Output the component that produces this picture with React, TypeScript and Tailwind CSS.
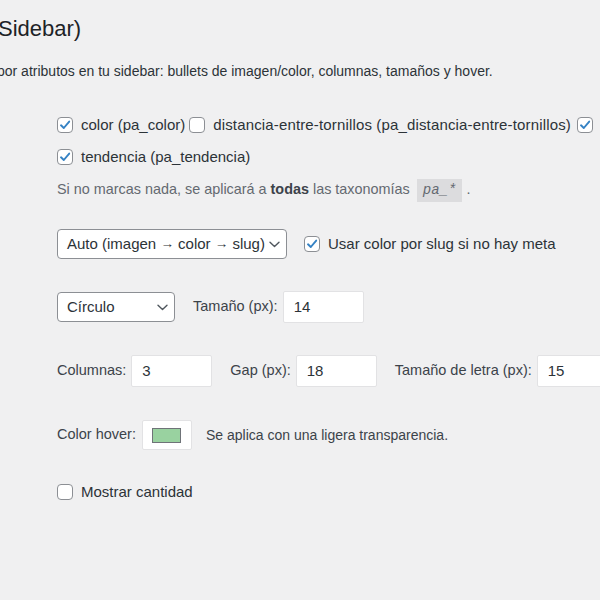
const Check = ({ checked }: { checked?: boolean }) => (
  <span className="flex h-4 w-4 shrink-0 items-center justify-center rounded-[4px] border border-[#8c8f94] bg-white">
    {checked && (
      <svg width="12" height="12" viewBox="0 0 12 12" fill="none">
        <path d="M2 6.3 L4.8 9 L10.2 2.6" stroke="#3582c4" strokeWidth="1.9" strokeLinecap="round" strokeLinejoin="round" />
      </svg>
    )}
  </span>
);

const Chevron = () => (
  <svg width="11" height="7" viewBox="0 0 11 7" fill="none">
    <path d="M1 1.2 L5.5 5.6 L10 1.2" stroke="#50575e" strokeWidth="1.4" strokeLinecap="round" strokeLinejoin="round" />
  </svg>
);

const Arrow = () => <span className="align-[1px] text-[13.5px]">→</span>;

const NumberInput = ({ value }: { value: string }) => (
  <div className="flex h-[32px] w-[81px] shrink-0 items-center rounded-[2px] border border-[#e2e2e4] bg-white pl-[10px] text-[15px] text-[#2c3338]">
    {value}
  </div>
);

export default function App() {
  return (
    <div className="h-[600px] w-[600px] overflow-hidden bg-[#f0f0f1] font-['Liberation_Sans',Arial,sans-serif] text-[#2c3338]">
      <h1 className="ml-[-2px] mt-[15px] whitespace-nowrap text-[22px] leading-[28px] text-[#1d2327]">Sidebar)</h1>
      <p className="ml-[-3px] mt-[19px] whitespace-nowrap text-[14px] leading-[18px] text-[#2c3338]">
        por atributos en tu sidebar: bullets de imagen/color, columnas, tamaños y hover.
      </p>

      <div className="ml-[57px] mt-[29px] w-[700px]">
        <div className="flex h-[32px] items-center whitespace-nowrap text-[15px]">
          <label className="mr-[4px] flex items-center gap-[8px]">
            <Check checked />
            <span>color (pa_color)</span>
          </label>
          <label className="mr-[6px] flex items-center gap-[8px]">
            <Check />
            <span className="tracking-[0.15px]">distancia-entre-tornillos (pa_distancia-entre-tornillos)</span>
          </label>
          <label className="flex items-center gap-[8px]">
            <Check checked />
          </label>
        </div>
        <div className="flex h-[32px] items-center whitespace-nowrap text-[15px]">
          <label className="flex items-center gap-[8px]">
            <Check checked />
            <span>tendencia (pa_tendencia)</span>
          </label>
        </div>
        <div className="mt-[1px] flex h-[32px] items-center whitespace-nowrap text-[14.4px] text-[#646970]">
          <span>
            Si no marcas nada, se aplicará a <b className="text-[#3c434a]">todas</b> las taxonomías
          </span>
          <code className="ml-[7px] bg-[#dcdcde] px-[6px] py-[1px] font-['Liberation_Mono',monospace] text-[14px] italic text-[#646970]">
            pa_*
          </code>
          <span className="ml-[4px]">.</span>
        </div>

        <div className="mt-[23px] flex items-center gap-[17px] whitespace-nowrap">
          <div className="flex h-[30px] w-[230px] shrink-0 items-center justify-between rounded-[4px] border border-[#8c8f94] bg-white pl-[9px] pr-[6px] text-[15px] text-[#2c3338]">
            <span className="whitespace-nowrap">
              Auto (imagen <Arrow /> color <Arrow /> slug)
            </span>
            <Chevron />
          </div>
          <label className="flex items-center gap-[8px] text-[15px]">
            <Check checked />
            <span>Usar color por slug si no hay meta</span>
          </label>
        </div>

        <div className="mt-[32px] flex h-[32px] items-center whitespace-nowrap text-[14.5px] text-[#3c434a]">
          <div className="flex h-[30px] w-[118px] shrink-0 items-center justify-between rounded-[4px] border border-[#8c8f94] bg-white pl-[9px] pr-[6px] text-[15px] text-[#2c3338]">
            <span>Círculo</span>
            <Chevron />
          </div>
          <span className="ml-[18px]">Tamaño (px):</span>
          <span className="ml-[5px]"><NumberInput value="14" /></span>
        </div>

        <div className="mt-[32px] flex h-[32px] items-center whitespace-nowrap text-[14.5px] text-[#3c434a]">
          <span>Columnas:</span>
          <span className="ml-[5px]"><NumberInput value="3" /></span>
          <span className="ml-[18px]">Gap (px):</span>
          <span className="ml-[5px]"><NumberInput value="18" /></span>
          <span className="ml-[18px]">Tamaño de letra (px):</span>
          <span className="ml-[5px]"><NumberInput value="15" /></span>
        </div>

        <div className="mt-[32px] flex h-[32px] items-center whitespace-nowrap text-[14.5px] text-[#3c434a]">
          <span>Color hover:</span>
          <div className="ml-[6px] flex h-[30px] w-[50px] items-center justify-center rounded-[2px] border border-[#e2e2e4] bg-white">
            <div className="h-[15px] w-[29px] border border-[#6f7378] bg-[#99d2a0]" />
          </div>
          <span className="ml-[14px] text-[14px]">Se aplica con una ligera transparencia.</span>
        </div>

        <div className="mt-[25px] flex h-[32px] items-center whitespace-nowrap text-[15px]">
          <label className="flex items-center gap-[8px]">
            <Check />
            <span>Mostrar cantidad</span>
          </label>
        </div>
      </div>
    </div>
  );
}
